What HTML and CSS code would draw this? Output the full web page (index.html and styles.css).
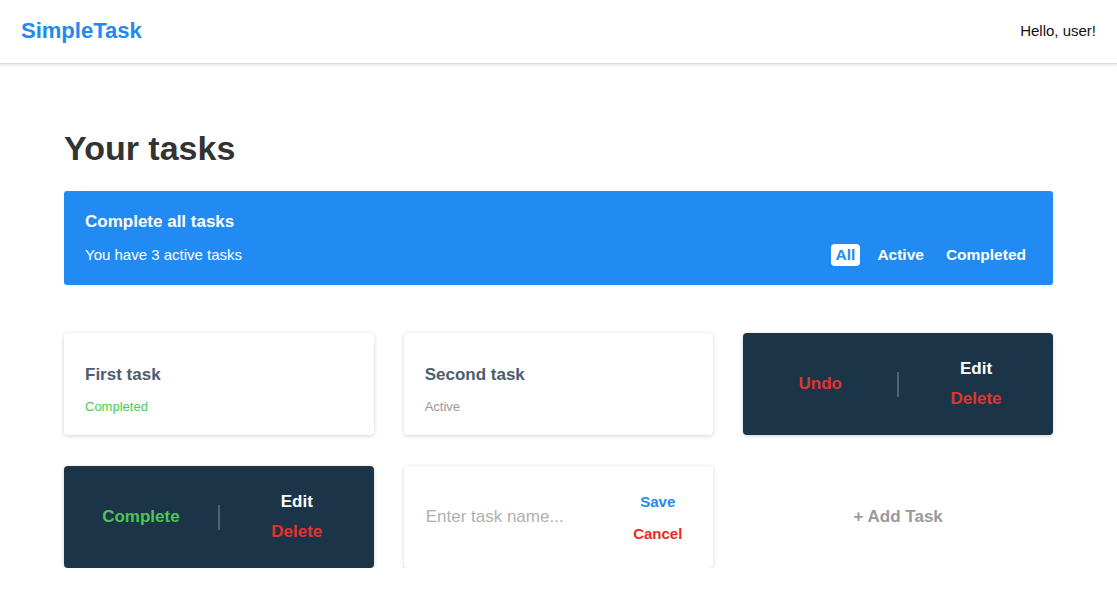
FILE: index.html
```html
<!DOCTYPE html>
<html>
<head>
<meta charset="utf-8">
<link rel="stylesheet" href="styles.css">
</head>
<body>
<header class="topbar">
  <div class="logo">SimpleTask</div>
  <div class="greeting">Hello, user!</div>
</header>
<main class="content">
  <h1 class="title">Your tasks</h1>
  <section class="banner">
    <div class="banner-text">
      <div class="banner-title">Complete all tasks</div>
      <div class="banner-sub">You have 3 active tasks</div>
    </div>
    <div class="filters">
      <span class="filter active">All</span>
      <span class="filter">Active</span>
      <span class="filter">Completed</span>
    </div>
  </section>
  <section class="grid">
    <div class="card">
      <div class="task-name">First task</div>
      <div class="status done">Completed</div>
    </div>
    <div class="card">
      <div class="task-name">Second task</div>
      <div class="status">Active</div>
    </div>
    <div class="card dark">
      <div class="half"><span class="act red">Undo</span></div>
      <div class="divider"></div>
      <div class="half stack"><span class="act white">Edit</span><span class="act red">Delete</span></div>
    </div>
    <div class="card dark">
      <div class="half"><span class="act green">Complete</span></div>
      <div class="divider"></div>
      <div class="half stack"><span class="act white">Edit</span><span class="act red">Delete</span></div>
    </div>
    <div class="card edit">
      <input class="task-input" type="text" placeholder="Enter task name...">
      <div class="edit-actions">
        <span class="save">Save</span>
        <span class="cancel">Cancel</span>
      </div>
    </div>
    <div class="add">+ Add Task</div>
  </section>
</main>
</body>
</html>
```
FILE: styles.css
```css
* { box-sizing: border-box; }
body {
  margin: 0;
  font-family: "Liberation Sans", Arial, sans-serif;
  background: #fff;
  color: #222;
}
.topbar {
  height: 64px;
  display: flex;
  align-items: center;
  justify-content: space-between;
  padding: 0 21px;
  border-bottom: 1px solid #dcdcdc;
  box-shadow: 0 1px 3px rgba(0,0,0,0.12);
}
.logo {
  color: #2189f0;
  font-weight: bold;
  font-size: 22px;
  margin-top: -2px;
}
.greeting {
  font-size: 15px;
  color: #111;
  margin-top: -2px;
}
.content {
  padding: 64px 64px 0;
}
.title {
  margin: 0;
  font-size: 34px;
  line-height: 40px;
  color: #333;
  font-weight: bold;
}
.banner {
  margin-top: 23px;
  height: 94px;
  background: #218bf3;
  border-radius: 3px;
  display: flex;
  justify-content: space-between;
  align-items: flex-end;
  padding: 0 22px 20px 21px;
  color: #fff;
}
.banner-text {
  margin-bottom: 2px;
}
.banner-title {
  font-weight: bold;
  font-size: 17px;
  margin-bottom: 14px;
}
.banner-sub {
  font-size: 15px;
}
.filters {
  display: flex;
  align-items: center;
  margin-bottom: -1px;
}
.filter {
  font-weight: bold;
  font-size: 15.5px;
  padding: 2px 5px;
  margin-left: 12px;
  border-radius: 4px;
}
.filter.active {
  background: #fff;
  color: #218bf3;
  margin-left: 0;
}
.grid {
  margin-top: 48px;
  display: grid;
  grid-template-columns: repeat(3, 1fr);
  column-gap: 30px;
  row-gap: 31px;
}
.card {
  height: 102px;
  background: #fff;
  border-radius: 4px;
  box-shadow: 0 1px 4px rgba(0,0,0,0.18);
  padding: 32px 21px 0;
}
.task-name {
  font-weight: bold;
  font-size: 17px;
  color: #4d5d6d;
}
.status {
  margin-top: 14px;
  font-size: 13px;
  color: #999;
}
.status.done { color: #3fcf55; }
.card.dark {
  background: #1b3448;
  padding: 0;
  display: flex;
  align-items: center;
}
.half {
  flex: 1;
  display: flex;
  justify-content: center;
  align-items: center;
}
.half.stack {
  flex-direction: column;
  gap: 10px;
  margin-top: -1px;
}
.divider {
  width: 2px;
  height: 25px;
  background: #4b6378;
}
.act {
  font-weight: bold;
  font-size: 17px;
}
.red { color: #e0352f; }
.white { color: #fff; }
.green { color: #4cc557; }
.card.edit {
  padding: 0 31px 0 22px;
  display: flex;
  align-items: center;
  justify-content: space-between;
}
.task-input {
  border: none;
  outline: none;
  font-family: "Liberation Sans", Arial, sans-serif;
  font-size: 17px;
  width: 170px;
  padding: 0;
  color: #333;
  background: transparent;
}
.task-input::placeholder { color: #b0b0b0; }
.edit-actions {
  display: flex;
  flex-direction: column;
  align-items: center;
  gap: 15px;
  font-weight: bold;
  font-size: 15px;
}
.save { color: #218bf3; }
.cancel { color: #ea2a22; }
.add {
  height: 102px;
  display: flex;
  align-items: center;
  justify-content: center;
  color: #9a9a9a;
  font-weight: bold;
  font-size: 17px;
}
```
